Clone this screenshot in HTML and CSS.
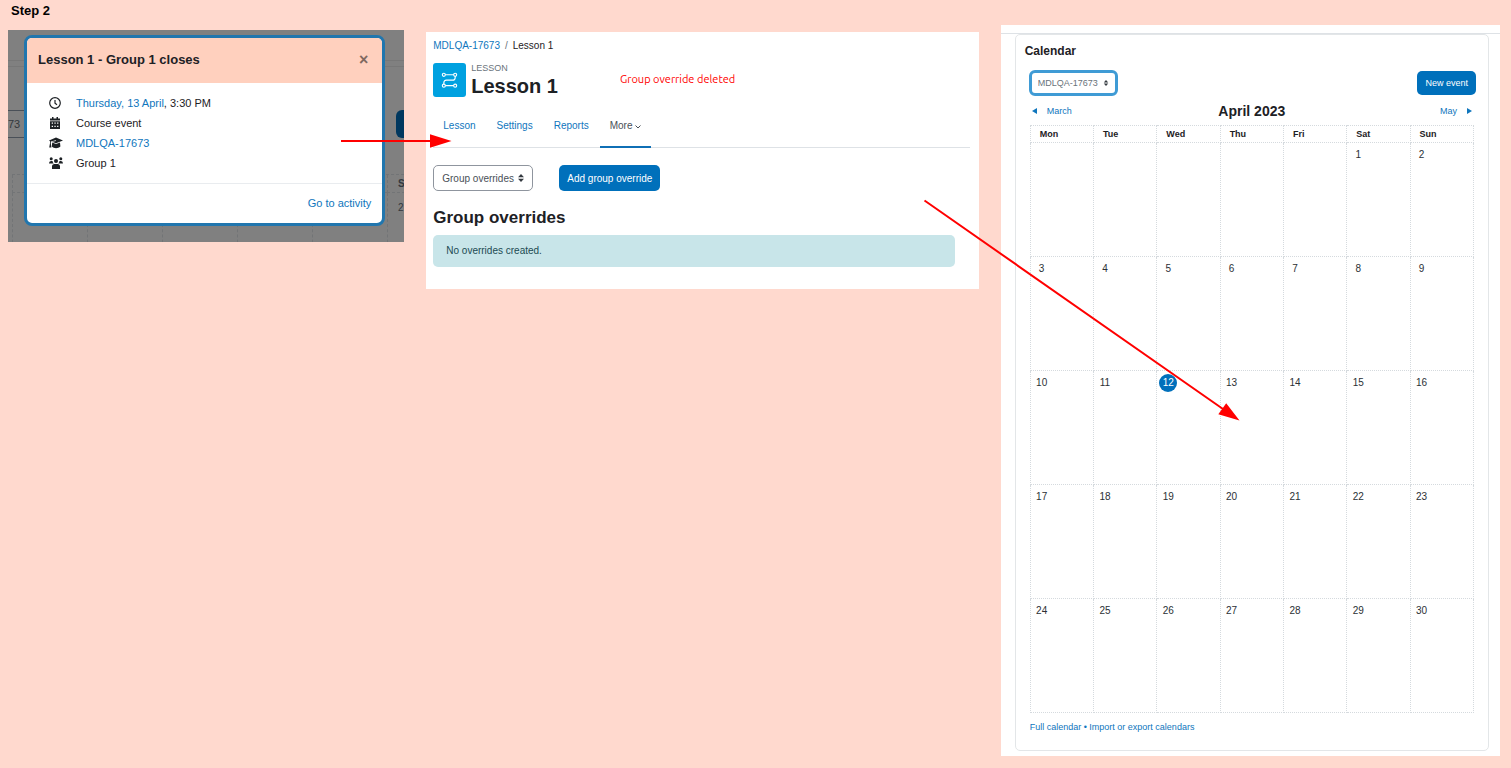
FILE: index.html
```
<!DOCTYPE html>
<html lang="en">

<head>
    <meta charset="UTF-8">
    <meta name="viewport" content="width=device-width, initial-scale=1.0">
    <title>Step 2</title>
    <link rel="stylesheet" href="styles.css">
</head>

<body>
    <h1 class="step-title">Step 2</h1>

    <main class="panels">
        <!-- Event dialog -->
        <section class="panel modal-panel">
            <div class="behind" aria-hidden="true">
                <div class="behind-rule"></div>
                <div class="behind-controls">
                    <span class="behind-select">73</span>
                    <span class="behind-button"></span>
                </div>
                <div class="behind-grid">
                    <b></b><b></b><b></b><b></b><b></b><b>S</b>
                    <i></i><i></i><i></i><i></i><i></i><i>2</i>
                </div>
            </div>

            <div class="modal" role="dialog" aria-labelledby="modal-title">
                <div class="modal-header">
                    <h2 id="modal-title">Lesson 1 - Group 1 closes</h2>
                    <button type="button" class="close" aria-label="Close">×</button>
                </div>
                <ul class="modal-body">
                    <li>
                        <svg class="icon" viewBox="0 0 14 12">
                            <circle cx="6" cy="6" r="5.300" fill="none" stroke="currentColor" stroke-width="1.200" />
                            <path d="M6 3v3.300l2 1.500" fill="none" stroke="currentColor" stroke-width="1.200" />
                        </svg>
                        <span><a href="#">Thursday, 13 April</a>, 3:30 PM</span>
                    </li>
                    <li>
                        <svg class="icon" viewBox="0 0 14 12">
                            <path fill="currentColor" fill-rule="evenodd"
                                d="M3 0h1.500v1.500h3V0H9v1.500h2V3.500H1V1.500h2zM1 4.200h10V12H1zM2.700 5.500v1.200h1.300V5.500zM5.400 5.500v1.200h1.300V5.500zM8.100 5.500v1.200h1.300V5.500zM2.700 8.700v1.200h1.300V8.700zM5.400 8.700v1.200h1.300V8.700zM8.100 8.700v1.200h1.300V8.700z" />
                        </svg>
                        <span>Course event</span>
                    </li>
                    <li>
                        <svg class="icon" viewBox="0 0 14 12">
                            <path fill="currentColor"
                                d="M7 .6l7 2.900-7 2.700-4-1.500 4-.8-.2-.6-5 1.200v1.700l.6 4.300H.2L1 6.200V4.300L0 3.500zM3.200 5.600L7 7.100l4-1.500.4 4C9 11.700 5 11.700 2.800 9.600z" />
                        </svg>
                        <a href="#">MDLQA-17673</a>
                    </li>
                    <li>
                        <svg class="icon" viewBox="0 0 14 12">
                            <g fill="currentColor">
                                <circle cx="2.200" cy="1.700" r="1.500" />
                                <circle cx="11.800" cy="1.700" r="1.500" />
                                <circle cx="7" cy="4" r="2" />
                                <path d="M0 6.500Q0 4 2 4h1.500q.3 1.800 1.300 2.500zM14 6.500Q14 4 12 4h-1.500q-.3 1.800-1.300 2.500zM3 12V9.500Q3 7 5.500 7h3Q11 7 11 9.500V12z" />
                            </g>
                        </svg>
                        <span>Group 1</span>
                    </li>
                </ul>
                <div class="modal-footer">
                    <a href="#">Go to activity</a>
                </div>
            </div>
        </section>

        <!-- Lesson overrides page -->
        <section class="panel lesson-panel">
            <nav class="breadcrumb">
                <a href="#">MDLQA-17673</a>
                <span class="divider">/</span>
                <span>Lesson 1</span>
            </nav>

            <header class="activity">
                <div class="activity-icon">
                    <svg viewBox="0 0 18 18" fill="none" stroke="#fff" stroke-width="1.200">
                        <circle cx="3" cy="3.500" r="1.600" />
                        <circle cx="15" cy="3.500" r="1.600" />
                        <circle cx="3" cy="15" r="1.600" />
                        <circle cx="15" cy="15" r="1.600" />
                        <path d="M4.600 3.500h8.800M15 5.100v1.400q0 2.700-2.700 2.700H5.700Q3 9.200 3 11.900v1.500M4.600 15h8.800" />
                    </svg>
                </div>
                <div class="activity-name">
                    <span class="activity-type">LESSON</span>
                    <h2>Lesson 1</h2>
                </div>
                <p class="note">Group override deleted</p>
            </header>

            <nav class="tabs">
                <a href="#">Lesson</a>
                <a href="#">Settings</a>
                <a href="#">Reports</a>
                <a href="#" class="active">More
                    <svg width="6" height="4" viewBox="0 0 6 4" fill="none" stroke="currentColor">
                        <path d="M.5.5L3 3 5.500.5" />
                    </svg>
                </a>
            </nav>

            <div class="actions">
                <div class="select">
                    <select aria-label="Overrides">
                        <option>Group overrides</option>
                    </select>
                    <svg viewBox="0 0 6 8"><path d="M3 0l3 3.300H0zM3 8L0 4.700h6z" /></svg>
                </div>
                <button type="button" class="btn">Add group override</button>
            </div>

            <h3>Group overrides</h3>
            <div class="alert">No overrides created.</div>
        </section>

        <!-- Calendar -->
        <section class="panel calendar-panel">
            <div class="calendar-card">
                <h2>Calendar</h2>
                <div class="calendar-controls">
                    <div class="select course-select">
                        <select aria-label="Course">
                            <option>MDLQA-17673</option>
                        </select>
                        <svg viewBox="0 0 6 8"><path d="M3 0l3 3.300H0zM3 8L0 4.700h6z" /></svg>
                    </div>
                    <button type="button" class="btn">New event</button>
                </div>
                <div class="month-nav">
                    <a href="#"><svg viewBox="0 0 5 6"><path d="M5 0v6L0 3z" /></svg>March</a>
                    <h3>April 2023</h3>
                    <a href="#">May<svg viewBox="0 0 5 6"><path d="M0 0v6l5-3z" /></svg></a>
                </div>
                <table class="month">
                    <thead>
                        <tr>
                            <th>Mon</th>
                            <th>Tue</th>
                            <th>Wed</th>
                            <th>Thu</th>
                            <th>Fri</th>
                            <th>Sat</th>
                            <th>Sun</th>
                        </tr>
                    </thead>
                    <tbody>
                        <tr>
                            <td></td>
                            <td></td>
                            <td></td>
                            <td></td>
                            <td></td>
                            <td><span>1</span></td>
                            <td><span>2</span></td>
                        </tr>
                        <tr>
                            <td><span>3</span></td>
                            <td><span>4</span></td>
                            <td><span>5</span></td>
                            <td><span>6</span></td>
                            <td><span>7</span></td>
                            <td><span>8</span></td>
                            <td><span>9</span></td>
                        </tr>
                        <tr>
                            <td><span>10</span></td>
                            <td><span>11</span></td>
                            <td><span class="today">12</span></td>
                            <td><span>13</span></td>
                            <td><span>14</span></td>
                            <td><span>15</span></td>
                            <td><span>16</span></td>
                        </tr>
                        <tr>
                            <td><span>17</span></td>
                            <td><span>18</span></td>
                            <td><span>19</span></td>
                            <td><span>20</span></td>
                            <td><span>21</span></td>
                            <td><span>22</span></td>
                            <td><span>23</span></td>
                        </tr>
                        <tr>
                            <td><span>24</span></td>
                            <td><span>25</span></td>
                            <td><span>26</span></td>
                            <td><span>27</span></td>
                            <td><span>28</span></td>
                            <td><span>29</span></td>
                            <td><span>30</span></td>
                        </tr>
                    </tbody>
                </table>
                <p class="calendar-links"><a href="#">Full calendar</a> <a href="#">• Import or export calendars</a></p>
            </div>
        </section>
    </main>

    <!-- Arrows between the panels -->
    <svg class="arrows" viewBox="0 0 1511 768" preserveAspectRatio="none" aria-hidden="true">
        <path d="M341 141H432M924.500 200.500L1223 409" fill="none" stroke="#f00" stroke-width="2" />
        <path d="M430 134.200L451.500 141L430 147.800zM1226.200 403.200L1239.500 420.500L1218.300 414.300z" fill="#f00" />
    </svg>
</body>

</html>
```
FILE: styles.css
```
* {
    box-sizing: border-box;
}

body {
    position: relative;
    margin: 0;
    min-height: 768px;
    font-family: "Liberation Sans", Arial, sans-serif;
    font-size: 10px;
    color: #1d2125;
    background-color: #ffd9ce;
}

h1,
h2,
h3,
p,
ul {
    margin: 0;
    padding: 0;
}

a {
    color: #0f76bd;
    text-decoration: none;
}

button,
select {
    font-family: inherit;
    font-size: inherit;
}

.step-title {
    padding-left: 11px;
    font-size: 13px;
    line-height: 22px;
    height: 25px;
    color: #000;
}

.panels {
    display: grid;
    grid-template-columns: 396fr 552fr 499fr;
    gap: 22px;
    align-items: start;
    padding: 0 11px 12px 8px;
}

.panel {
    background-color: #fff;
}

/* Event dialog */
.modal-panel {
    position: relative;
    overflow: hidden;
    margin-top: 5px;
    padding: 5px 19px 16px 16px;
    background-color: #808080;
}

.behind {
    position: absolute;
    inset: 0;
    padding-top: 30px;
    color: #33383d;
}

.behind-rule {
    height: 7px;
    border-top: 1px solid #777;
    border-bottom: 1px solid #777;
}

.behind-controls {
    display: flex;
    justify-content: space-between;
    margin-top: 43px;
}

.behind-select {
    width: 30px;
    height: 28px;
    border: 1px solid #4a5058;
    border-left: 0;
    font-size: 11px;
    line-height: 26px;
}

.behind-button {
    width: 8px;
    height: 28px;
    border-radius: 6px 0 0 6px;
    background-color: #00385f;
}

.behind-grid {
    display: grid;
    grid-template-columns: repeat(5, 75px) 1fr;
    grid-template-rows: 18px 60px;
    margin: 36px 0 0 4px;
    border-top: 1px dashed #727476;
    font-size: 10px;
    line-height: 18px;
}

.behind-grid b,
.behind-grid i {
    padding-left: 10px;
    border-left: 1px dashed #727476;
    border-bottom: 1px dashed #727476;
    font-style: normal;
}

.behind-grid i {
    padding-top: 6px;
}

.modal {
    position: relative;
    border: 3px solid #2176ae;
    border-radius: 8px;
    background-color: #fff;
    font-size: 11px;
    overflow: hidden;
}

.modal-header {
    display: flex;
    align-items: center;
    justify-content: space-between;
    height: 45px;
    padding: 0 11px 2px;
    background-color: #ffd0be;
}

.modal-header h2 {
    font-size: 13px;
}

.close {
    padding: 0 3px;
    border: 0;
    background: none;
    font-size: 16px;
    font-weight: bold;
    color: #80685f;
}

.modal-body {
    padding: 10px 22px;
    list-style: none;
}

.modal-body li {
    display: flex;
    align-items: center;
    gap: 13px;
    height: 20px;
}

.icon {
    width: 14px;
    height: 12px;
}

.modal-footer {
    padding: 0 11px;
    border-top: 1px solid #e9ecef;
    line-height: 39px;
    text-align: right;
}

/* Lesson page */
.lesson-panel {
    margin-top: 7px;
    padding: 0 9px 22px 7px;
}

.breadcrumb {
    display: flex;
    gap: 5px;
    line-height: 28px;
}

.divider {
    color: #6a737b;
}

.activity {
    display: flex;
    margin-top: 3px;
    height: 34px;
}

.activity-icon {
    display: flex;
    align-items: center;
    justify-content: center;
    width: 33px;
    border-radius: 3px;
    background-color: #00a1e0;
}

.activity-icon svg {
    width: 17px;
    height: 18px;
}

.activity-name {
    margin-left: 5px;
}

.activity-type {
    display: block;
    font-size: 9px;
    line-height: 10px;
    color: #6a737b;
}

.activity-name h2 {
    font-size: 20px;
    line-height: 27px;
}

.note {
    margin-left: 62px;
    font-family: Ubuntu, "Noto Sans", sans-serif;
    font-size: 11px;
    line-height: 32px;
    color: #f00;
}

.tabs {
    display: flex;
    gap: 1px;
    margin-top: 8px;
    border-bottom: 1px solid #dee2e6;
}

.tabs a {
    height: 42px;
    padding: 0 10px;
    line-height: 42px;
}

.tabs .active {
    height: 43px;
    margin-bottom: -1px;
    border-bottom: 2px solid #0f6fb5;
    color: #495057;
}

.actions {
    display: flex;
    gap: 26px;
    margin-top: 17px;
}

.select {
    position: relative;
}

.select select {
    width: 100px;
    height: 26px;
    padding: 0 8px;
    border: 1px solid #8f959e;
    border-radius: 5px;
    background-color: #fff;
    color: #495057;
    appearance: none;
}

.select svg {
    position: absolute;
    top: 9px;
    right: 9px;
    width: 6px;
    height: 8px;
    fill: #343a40;
    pointer-events: none;
}

.btn {
    height: 26px;
    padding: 0 8px;
    border: 0;
    border-radius: 5px;
    background-color: #0070bb;
    color: #fff;
}

.lesson-panel h3 {
    margin-top: 17px;
    font-size: 17px;
    line-height: 20px;
}

.alert {
    margin: 7px 15px 0 0;
    padding: 0 13px;
    border-radius: 5px;
    background-color: #c8e5e9;
    color: #1b4a52;
    line-height: 32px;
}

/* Calendar */
.calendar-panel {
    padding: 8px 0 5px;
    font-size: 9px;
}

.calendar-panel::before {
    content: "";
    display: block;
    border-top: 1px solid #dee2e6;
}

.calendar-card {
    margin: 0 11px 0 14px;
    padding: 7px 12px 13px 9px;
    border: 1px solid #e3e6e8;
    border-radius: 5px;
}

.calendar-card h2 {
    font-size: 12px;
    line-height: 18px;
}

.calendar-controls {
    display: flex;
    align-items: center;
    justify-content: space-between;
    margin-top: 10px;
    padding-left: 4px;
}

.course-select select {
    width: 89px;
    border: 3px solid #3f9bd5;
    border-radius: 6px;
    padding: 0 6px;
    color: #6a737b;
}

.course-select svg {
    top: 10px;
    height: 6px;
}

.calendar-controls .btn {
    height: 24px;
}

.month-nav {
    display: grid;
    grid-template-columns: 1fr auto 1fr;
    align-items: center;
    height: 29px;
    padding: 1px 4px 0 7px;
}

.month-nav h3 {
    font-size: 14px;
}

.month-nav a:last-child {
    text-align: right;
}

.month-nav svg {
    width: 5px;
    height: 6px;
    margin-right: 10px;
    fill: currentColor;
}

.month-nav a:last-child svg {
    margin: 0 0 0 10px;
}

.month {
    width: calc(100% - 7px);
    margin-left: 5px;
    border-collapse: collapse;
    table-layout: fixed;
}

.month th,
.month td {
    border: 1px dotted #d5dade;
    text-align: left;
    vertical-align: top;
}

.month th {
    height: 17px;
    padding: 0 9px;
    line-height: 16px;
}

.month td {
    height: 114px;
    padding: 3px 2px;
    font-size: 10px;
    color: #2b3035;
}

.month td span {
    display: block;
    width: 18px;
    line-height: 18px;
    text-align: center;
}

.month .today {
    border-radius: 50%;
    background-color: #0070bb;
    color: #fff;
}

.calendar-links {
    margin-top: 4px;
    padding-left: 5px;
    line-height: 20px;
}

.arrows {
    position: absolute;
    top: 0;
    left: 0;
    width: 100%;
    height: 768px;
    pointer-events: none;
}
```
